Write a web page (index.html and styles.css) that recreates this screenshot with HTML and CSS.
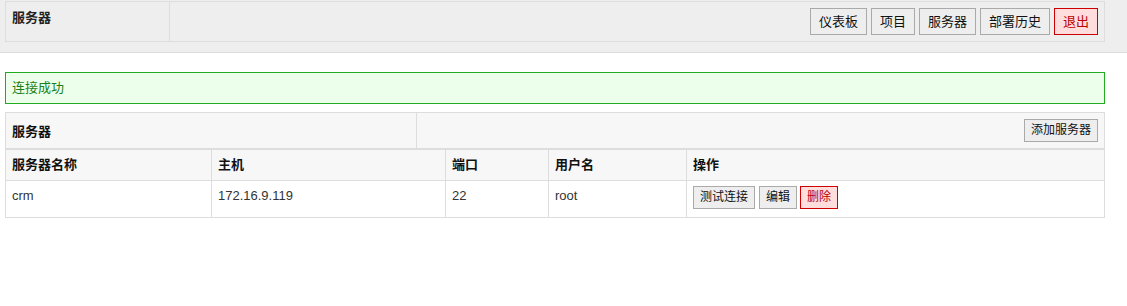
FILE: index.html
```html
<!DOCTYPE html>
<html lang="zh-CN">

<head>
    <meta charset="UTF-8">
    <title>服务器</title>
    <link rel="stylesheet" href="styles.css">
</head>

<body>
    <!-- 顶部导航 -->
    <div class="topbar">
        <div class="topbar_inner">
            <div class="topbar_title">服务器</div>
            <div class="topbar_nav">
                <a href="javascript:;" class="btn">仪表板</a>
                <a href="javascript:;" class="btn">项目</a>
                <a href="javascript:;" class="btn">服务器</a>
                <a href="javascript:;" class="btn">部署历史</a>
                <a href="javascript:;" class="btn btn_danger">退出</a>
            </div>
        </div>
    </div>

    <div class="main">
        <!-- 提示信息 -->
        <div class="msg_ok">连接成功</div>

        <!-- 服务器列表 -->
        <div class="panel">
            <div class="panel_head">
                <div class="panel_title">服务器</div>
                <div class="panel_tools">
                    <a href="javascript:;" class="btn btn_sm">添加服务器</a>
                </div>
            </div>
            <table class="list">
                <thead>
                    <tr>
                        <th class="col_name">服务器名称</th>
                        <th class="col_host">主机</th>
                        <th class="col_port">端口</th>
                        <th class="col_user">用户名</th>
                        <th>操作</th>
                    </tr>
                </thead>
                <tbody>
                    <tr>
                        <td>crm</td>
                        <td>172.16.9.119</td>
                        <td>22</td>
                        <td>root</td>
                        <td class="ops">
                            <a href="javascript:;" class="btn btn_sm">测试连接</a>
                            <a href="javascript:;" class="btn btn_sm">编辑</a>
                            <a href="javascript:;" class="btn btn_sm btn_danger">删除</a>
                        </td>
                    </tr>
                </tbody>
            </table>
        </div>
    </div>
</body>

</html>
```

FILE: styles.css
```css
* {
    margin: 0;
    padding: 0;
    box-sizing: border-box;
}

body {
    font-family: "Liberation Sans", "Noto Sans CJK SC", sans-serif;
    font-size: 13px;
    color: #222;
    background-color: #fff;
}

/*按钮*/

.btn {
    display: inline-block;
    padding: 4px 8px;
    line-height: 17px;
    font-size: 13px;
    color: #111;
    text-decoration: none;
    background-color: #eee;
    border: 1px solid #aaa;
}

.btn_sm {
    padding: 3px 6px;
    line-height: 15px;
    font-size: 12px;
}

.btn_danger {
    color: #b00;
    background-color: #fdd;
    border-color: #c00;
}

/*顶部导航*/

.topbar {
    background-color: #eee;
    border-bottom: 1px solid #ddd;
    padding: 1px 0 10px;
}

.topbar_inner {
    display: flex;
    width: 1100px;
    margin-left: 5px;
    border: 1px solid #ddd;
}

.topbar_title {
    width: 164px;
    padding: 6px;
    font-weight: bold;
    line-height: 19px;
    border-right: 1px solid #ddd;
}

.topbar_nav {
    flex: 1;
    display: flex;
    justify-content: flex-end;
    gap: 4px;
    padding: 6px;
}

/*内容*/

.main {
    width: 1100px;
    margin-left: 5px;
}

.msg_ok {
    margin: 19px 0 8px;
    padding: 7px 6px;
    line-height: 16px;
    color: #1a7f1a;
    background-color: #ebffeb;
    border: 1px solid #22aa22;
}

.panel_head {
    display: flex;
    background-color: #f7f7f7;
    border: 1px solid #ddd;
    border-bottom-width: 2px;
}

.panel_title {
    width: 411px;
    display: flex;
    align-items: center;
    padding: 0 6px;
    font-weight: bold;
    color: #111;
    border-right: 1px solid #ddd;
}

.panel_tools {
    flex: 1;
    text-align: right;
    padding: 6px;
}

.list {
    width: 1100px;
    border-collapse: collapse;
    table-layout: fixed;
}

.list th,
.list td {
    text-align: left;
    vertical-align: top;
    border: 1px solid #ddd;
    padding: 6px;
}

.list th {
    border-top: 0;
    line-height: 18px;
    color: #111;
    background-color: #f7f7f7;
}

.list td {
    line-height: 19px;
    color: #333;
    padding: 5px 6px 8px;
}

.list td.ops {
    padding: 5px 6px 6px;
    font-size: 0;
}

.list td.ops .btn {
    margin-right: 4px;
}

.list td.ops .btn:nth-child(2) {
    margin-right: 3px;
}

.col_name {
    width: 206px;
}

.col_host {
    width: 234px;
}

.col_port {
    width: 103px;
}

.col_user {
    width: 138px;
}
```
